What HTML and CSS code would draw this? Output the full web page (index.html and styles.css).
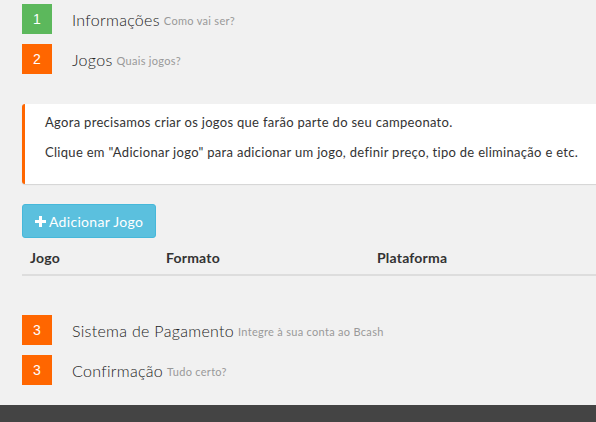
FILE: index.html
```html
<!DOCTYPE html>
<html lang="pt-BR">
<head>
<meta charset="utf-8">
<link rel="stylesheet" href="styles.css">
</head>
<body>
<div class="page">
  <div class="step">
    <span class="badge green">1</span>
    <span class="title">Informações</span>
    <small class="sub">Como vai ser?</small>
  </div>
  <div class="step">
    <span class="badge orange">2</span>
    <span class="title">Jogos</span>
    <small class="sub">Quais jogos?</small>
  </div>

  <div class="content">
    <div class="alert">
      <p>Agora precisamos criar os jogos que farão parte do seu campeonato.</p>
      <p>Clique em "Adicionar jogo" para adicionar um jogo, definir preço, tipo de eliminação e etc.</p>
    </div>

    <button class="btn" type="button"><svg class="plus" viewBox="0 0 11 11" width="11" height="11"><path d="M4 0h3v4h4v3H7v4H4V7H0V4h4z" fill="#fff"/></svg>Adicionar Jogo</button>

    <table class="games">
      <thead>
        <tr><th class="c1">Jogo</th><th class="c2">Formato</th><th class="c3">Plataforma</th></tr>
      </thead>
    </table>
  </div>

  <div class="step">
    <span class="badge orange">3</span>
    <span class="title">Sistema de Pagamento</span>
    <small class="sub">Integre à sua conta ao Bcash</small>
  </div>
  <div class="step">
    <span class="badge orange">3</span>
    <span class="title">Confirmação</span>
    <small class="sub">Tudo certo?</small>
  </div>
</div>
<footer class="footer"></footer>
</body>
</html>
```
FILE: styles.css
```css
html, body {
  margin: 0;
  padding: 0;
  background: #f1f1f1;
  overflow-x: hidden;
}
body {
  font-family: Lato, "Open Sans", sans-serif;
  color: #333;
}
.page {
  padding: 4px 0 10px 22px;
}
.step {
  display: flex;
  align-items: center;
  height: 30px;
  margin-bottom: 10px;
}
.badge {
  width: 30px;
  height: 30px;
  flex: 0 0 30px;
  display: flex;
  align-items: center;
  justify-content: center;
  color: #fff;
  font-family: "Liberation Sans", Arial, sans-serif;
  font-size: 14px;
  margin-right: 20px;
}
.green { background: #5cb85c; }
.orange { background: #ff6600; }
.title {
  font-weight: 300;
  font-size: 16px;
  letter-spacing: 0.3px;
  color: #222;
}
.sub {
  font-size: 11px;
  letter-spacing: 0.3px;
  color: #999;
  margin-left: 4px;
  padding-top: 3px;
}
.content {
  padding: 20px 0 39px;
}
.alert {
  background: #fff;
  border-left: 3px solid #ff6600;
  border-radius: 3px 0 0 3px;
  box-shadow: 0 1px 1px rgba(0,0,0,0.12);
  padding: 8px 20px 12px;
  margin-right: -20px;
  font-size: 13px;
  letter-spacing: 0.3px;
  line-height: 20px;
  color: #333;
}
.alert p {
  margin: 0 0 10px;
  white-space: nowrap;
}
.btn {
  display: flex;
  align-items: center;
  gap: 3px;
  margin-top: 20px;
  height: 34px;
  width: 134px;
  padding: 0 0 0 12px;
  background: #5bc0de;
  border: 1px solid #46b8da;
  border-radius: 3px;
  color: #fff;
  font-family: Lato, sans-serif;
  font-size: 14px;
  letter-spacing: 0.3px;
}
.plus { flex: 0 0 11px; }
.games {
  width: calc(100% + 20px);
  border-collapse: collapse;
  font-size: 14px;
  letter-spacing: 0.2px;
}
.games th {
  text-align: left;
  font-weight: 700;
  height: 34px;
  padding: 2px 8px 0;
  border-bottom: 2px solid #ddd;
  color: #333;
}
.games .c1 { width: 120px; }
.games .c2 { width: 195px; }
.footer {
  height: 20px;
  background: #444;
}
```
